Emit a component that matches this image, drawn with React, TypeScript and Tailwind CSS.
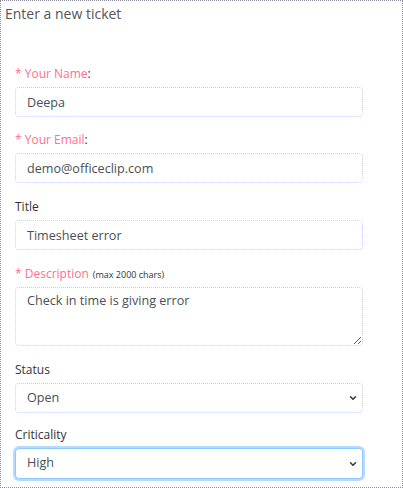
import { ChevronDown } from "lucide-react";

const font = { fontFamily: '"Open Sans", "Noto Sans", sans-serif' };

const Label = ({ text, required, note }: { text: string; required?: boolean; note?: string }) => (
  <div className="h-[18px] mb-[4px] text-[12px] leading-[18px] text-[#333]">
    {required ? (
      <>
        <span className="text-[#ff6f8f]">* {text}</span>
        {note ? <span className="ml-[4px] text-[9px] text-[#333]">{note}</span> : ":"}
      </>
    ) : (
      text
    )}
  </div>
);

const inputCls =
  "block w-full h-[30px] px-[11px] border border-dotted border-[#c9ccf6] rounded-[4px] text-[12.6px] text-[#4a4f57] bg-white outline-none";

const Select = ({ value, options, focused }: { value: string; options: string[]; focused?: boolean }) => (
  <div className="relative">
    <select
      defaultValue={value}
      style={font}
      className={
        focused
          ? "block w-full h-[31px] px-[11px] appearance-none border border-[#8fc9ff] shadow-[0_0_0_2px_#b5dcff] rounded-[4px] text-[12.6px] text-[#4a4f57] bg-white outline-none"
          : "block w-full h-[30px] px-[11px] appearance-none border border-dotted border-[#c9ccf6] rounded-[4px] text-[12.6px] text-[#4a4f57] bg-white outline-none"
      }
    >
      {options.map((o) => (
        <option key={o}>{o}</option>
      ))}
    </select>
    <ChevronDown
      className="absolute right-[5px] top-1/2 -translate-y-1/2 w-[10px] h-[10px] text-[#333] pointer-events-none"
      strokeWidth={3.5}
    />
  </div>
);

export default function App() {
  return (
    <div
      style={font}
      className="w-[403px] h-[488px] border border-dotted border-[#8c8c9c] bg-white overflow-hidden"
    >
      <div className="pl-[4px] pt-[3px] text-[14px] leading-[20px] text-[#555]">Enter a new ticket</div>
      <form className="w-[348px] ml-[14px] mt-[41px] flex flex-col">
        <Label text="Your Name" required />
        <input className={inputCls} style={font} defaultValue="Deepa" />

        <div className="mt-[14px]">
          <Label text="Your Email" required />
          <input className={inputCls} style={font} defaultValue="demo@officeclip.com" />
        </div>

        <div className="mt-[15px]">
          <Label text="Title" />
          <input className={inputCls} style={font} defaultValue="Timesheet error" />
        </div>

        <div className="mt-[15px]">
          <Label text="Description" required note="(max 2000 chars)" />
          <textarea
            style={font}
            className="block w-full h-[59px] px-[11px] py-[4px] border border-dotted border-[#c9ccf6] rounded-[4px] text-[12.6px] text-[#4a4f57] bg-white outline-none"
            defaultValue="Check in time is giving error"
          />
        </div>

        <div className="mt-[15px]">
          <Label text="Status" />
          <Select value="Open" options={["Open", "Closed", "In Progress"]} />
        </div>

        <div className="mt-[13px]">
          <Label text="Criticality" />
          <Select value="High" options={["Low", "Medium", "High"]} focused />
        </div>
      </form>
    </div>
  );
}
